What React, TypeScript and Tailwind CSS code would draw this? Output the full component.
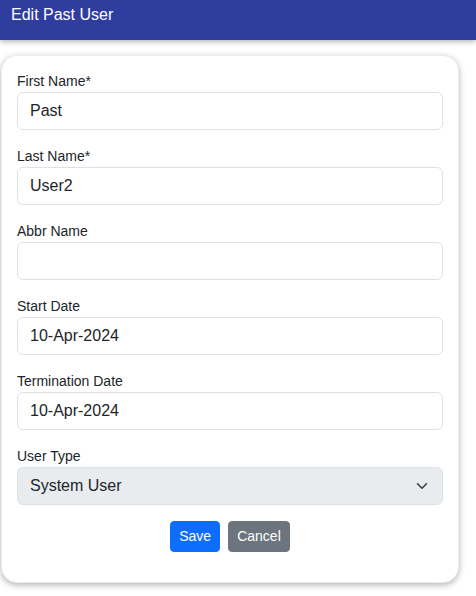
import React from 'react';

const fields = [
  { label: 'First Name*', value: 'Past' },
  { label: 'Last Name*', value: 'User2' },
  { label: 'Abbr Name', value: '' },
  { label: 'Start Date', value: '10-Apr-2024' },
  { label: 'Termination Date', value: '10-Apr-2024' },
];

export default function App() {
  return (
    <div className="min-h-[596px] bg-white font-['Liberation_Sans',Arial,sans-serif] text-[#212529]">
      {/* App bar */}
      <div className="h-10 bg-[#2f3d9e] px-[11px] pt-[3px] text-base leading-6 text-white shadow-[0_2px_5px_rgba(0,0,0,0.28)]">
        Edit Past User
      </div>

      {/* Form card */}
      <div className="ml-[1px] mt-[15px] w-[458px] rounded-2xl border border-[#ececec] bg-white px-[15px] pt-[15px] pb-[30px] shadow-[0_2px_6px_rgba(0,0,0,0.3)]">
        {fields.map((f) => (
          <div key={f.label} className="mb-4">
            <label className="block text-sm leading-[21px]">{f.label}</label>
            <input
              type="text"
              defaultValue={f.value}
              className="block h-[38px] w-full rounded-md border border-[#dee2e6] bg-white px-3 text-base leading-6 text-[#212529] outline-none"
            />
          </div>
        ))}

        <div className="mb-4">
          <label className="block text-sm leading-[21px]">User Type</label>
          <div className="flex h-[38px] w-full items-center justify-between rounded-md border border-[#dee2e6] bg-[#e9ecef] pl-3 pr-3 text-base leading-6">
            <span>System User</span>
            <svg width="16" height="12" viewBox="0 0 16 16" fill="none">
              <path d="m2 5 6 6 6-6" stroke="#343a40" strokeWidth="2" strokeLinecap="round" strokeLinejoin="round" />
            </svg>
          </div>
        </div>

        <div className="flex justify-center gap-2">
          <button className="rounded border border-[#0d6efd] bg-[#0d6efd] px-2 py-1 text-sm leading-[21px] text-white">
            Save
          </button>
          <button className="rounded border border-[#6c757d] bg-[#6c757d] px-2 py-1 text-sm leading-[21px] text-white">
            Cancel
          </button>
        </div>
      </div>
    </div>
  );
}
